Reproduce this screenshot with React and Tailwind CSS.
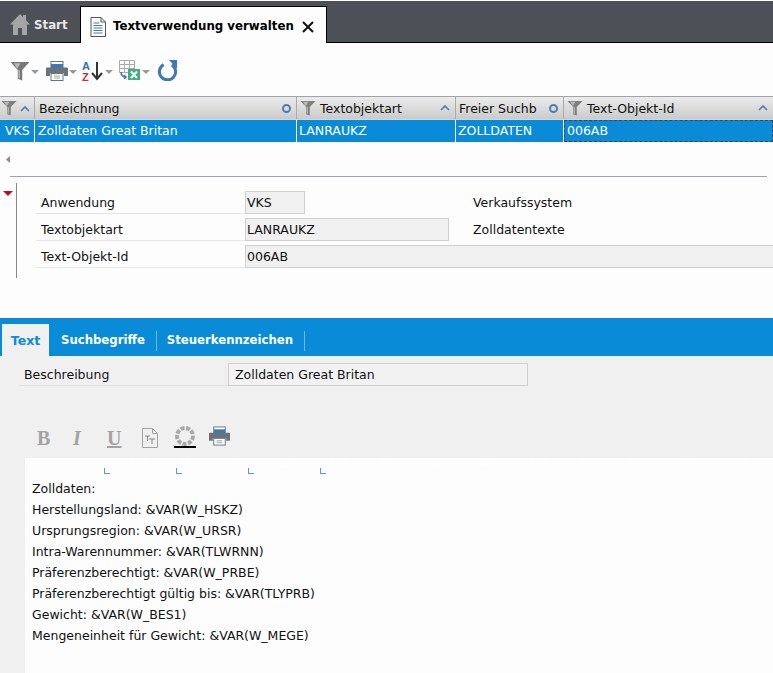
import React from "react";

const font = { fontFamily: '"DejaVu Sans", Verdana, sans-serif' };

function Funnel({ className = "w-[18px] h-[18px]", color = "#7f7f7f" }) {
  return (
    <svg viewBox="0 0 18 18" className={className}>
      <path d="M0.500 1h17l-6.500 7v9.500l-4-1.500V8z" fill={color} />
      <path d="M3.500 2h6l-3 5z" fill="#b8b8b8" />
      <path d="M7.500 8v7l1.500.7V8.500z" fill="#b0b0b0" />
    </svg>
  );
}
function Chevron() {
  return (
    <svg viewBox="0 0 10 6" className="w-[10px] h-[6px]">
      <path d="M1 5l4-4 4 4" fill="none" stroke="#4a7fb5" strokeWidth="1.700" />
    </svg>
  );
}
function Circle() {
  return <span className="w-[9px] h-[9px] rounded-full border-2 border-[#4a7fb5] shrink-0" />;
}
function Caret() {
  return (
    <svg viewBox="0 0 8 4" className="w-[8px] h-[4px] ml-[1px] mt-[2px] shrink-0">
      <path d="M0 0h8L4 4z" fill="#9a9a9a" />
    </svg>
  );
}
function Printer({ className }) {
  return (
    <svg viewBox="0 0 22 20" className={className}>
      <rect x="5" y="0.500" width="12" height="6" fill="#fff" stroke="#6b7378" />
      <path d="M0 7.500a1 1 0 011-1h20a1 1 0 011 1V15h-4v-3H4v3H0z" fill="#6b7378" />
      <rect x="5" y="3" width="12" height="4" fill="#3f78b3" />
      <rect x="5" y="12.500" width="12" height="7" fill="#fff" stroke="#6b7378" />
      <path d="M8 15h6M8 17h6" stroke="#8aa" strokeWidth="1" />
    </svg>
  );
}

function HeaderCell({ w, children, last }) {
  return (
    <div className={`h-[22px] pt-[2px] flex items-center shrink-0 border-r border-[#a8acaf] bg-gradient-to-b from-[#ececec] to-[#cbcbcb] ${w} ${last ? "grow border-r-0" : ""}`}>
      {children}
    </div>
  );
}

function Cell({ w, children, focus }) {
  return (
    <div className={`h-[22px] flex items-center shrink-0 text-white pl-[2px] ${w} ${focus ? "border border-dashed border-[#444] grow" : "border-r border-white"}`}>
      {children}
    </div>
  );
}

function FormRow({ label, value, inputW, note }) {
  return (
    <div className="flex items-start h-[27px]">
      <div className="w-[209px] h-[27px] pt-[6px] shrink-0 flex items-center pl-[5px] border-b border-[#e6e6e6] text-[#111]">{label}</div>
      <div className={`pt-[4px] ${note ? "w-[204px] shrink-0" : "shrink-0"}`}>
        <div className={`h-[23px] ${inputW} border border-[#cfcfcf] bg-[#f0f0f0] flex items-center pl-[1px] pt-[2px]`}>{value}</div>
      </div>
      {note && <div className="ml-[24px] h-[27px] pt-[6px] flex items-center text-[#111]">{note}</div>}
    </div>
  );
}

const textLines = [
  "Zolldaten:",
  "Herstellungsland: &VAR(W_HSKZ)",
  "Ursprungsregion: &VAR(W_URSR)",
  "Intra-Warennummer: &VAR(TLWRNN)",
  "Präferenzberechtigt: &VAR(W_PRBE)",
  "Präferenzberechtigt gültig bis: &VAR(TLYPRB)",
  "Gewicht: &VAR(W_BES1)",
  "Mengeneinheit für Gewicht: &VAR(W_MEGE)",
];

const ruler = [0, 50, 100, 150, 200, 250, 300, 350, 400, 450, 500, 550, 600, 650, 700];

export default function App() {
  return (
    <div className="w-[773px] h-[673px] overflow-hidden bg-[#fdfdfd] text-[12.5px] text-[#111] flex flex-col" style={font}>
      {/* tab bar */}
      <div className="h-[42px] shrink-0 mt-[1px] bg-[#4d5157] border-b border-black flex items-end">
        <div className="w-[80px] h-[37px] pt-[3px] flex items-center pl-[10px] gap-[4px] text-[#e8e8e8] font-bold text-[11.8px]">
          <svg viewBox="0 0 20 21" className="w-[20px] h-[21px] shrink-0 -mt-[1px]">
            <path d="M10 0L0 10.500h3V21h5v-7h4v7h5V10.500h3L16 6.300V1h-3v2.200z" fill="#a5a5a5" />
          </svg>
          <span className="mt-[1px]">Start</span>
        </div>
        <div className="w-[247px] h-[37px] pt-[3px] -mb-[1px] bg-[#fdfdfd] border border-black border-b-0 flex items-center pl-[9px] font-bold text-[11.8px] text-black">
          <svg viewBox="0 0 16 20" className="w-[16px] h-[20px] shrink-0">
            <path d="M1 .5h10l4.500 4.500v14.500H1z" fill="#fff" stroke="#555" />
            <path d="M11 .5V5h4.500" fill="none" stroke="#555" />
            <path d="M3.500 6h6M3.500 8.500h9M3.500 11h9M3.500 13.500h9M3.500 16h9" stroke="#3f78c0" />
          </svg>
          <span className="ml-[7px] whitespace-nowrap">Textverwendung verwalten</span>
          <svg viewBox="0 0 12 12" className="w-[12px] h-[12px] ml-[8px] shrink-0">
            <path d="M1 1l10 10M11 1L1 11" stroke="#111" strokeWidth="2" />
          </svg>
        </div>
      </div>

      {/* toolbar */}
      <div className="h-[53px] pt-[2px] shrink-0 flex items-center pl-[10px]">
        <Funnel className="w-[20px] h-[20px]" color="#777" />
        <Caret />
        <Printer className="w-[22px] h-[20px] ml-[7px]" />
        <Caret />
        <svg viewBox="0 0 22 22" className="w-[22px] h-[22px] ml-[5px] shrink-0">
          <text x="0" y="10" fontSize="11" fontWeight="bold" fill="#2f6fb5" fontFamily="Liberation Sans">A</text>
          <text x="0" y="21" fontSize="11" fontWeight="bold" fill="#c8321e" fontFamily="Liberation Sans">Z</text>
          <path d="M15 2v17M10 13l5 6 5-6" fill="none" stroke="#333" strokeWidth="2" />
        </svg>
        <Caret />
        <svg viewBox="0 0 22 21" className="w-[22px] h-[21px] ml-[6px] shrink-0">
          <path d="M.5.500h15v12H.5zM5.500.500v12M10.500.500v12M.5 4.500h15M.5 8.500h15" fill="none" stroke="#aaa" />
          <rect x="9" y="9" width="12" height="11" fill="#3fae7f" />
          <path d="M12 11.500l6 6.500M18 11.500l-6 6.500" stroke="#fff" strokeWidth="2" />
          <path d="M2 12c0 4 2 5 5 5M5 15l2 2-2 2" fill="none" stroke="#3f78b3" strokeWidth="1.500" />
        </svg>
        <Caret />
        <svg viewBox="0 0 22 22" className="w-[21px] h-[21px] ml-[7px] shrink-0">
          <path d="M7 4.800a8.500 8.500 0 1 0 8.500.300" fill="none" stroke="#3f78b3" strokeWidth="3.200" />
          <path d="M12.500 0H21v9z" fill="#3f78b3" />
        </svg>
      </div>

      {/* grid */}
      <div className="shrink-0 border-t border-[#a0a4a8] flex">
        <HeaderCell w="w-[35px]">
          <Funnel className="w-[16px] h-[18px] ml-[1px] -mt-[2px]" />
          <span className="ml-[3px] flex"><Chevron /></span>
        </HeaderCell>
        <HeaderCell w="w-[262px]">
          <span className="ml-[4px] grow">Bezeichnung</span>
          <span className="mr-[5px] flex -mt-[2px]"><Circle /></span>
        </HeaderCell>
        <HeaderCell w="w-[159px]">
          <Funnel className="w-[16px] h-[18px] ml-[3px] -mt-[2px]" />
          <span className="ml-[4px] grow">Textobjektart</span>
          <span className="mr-[5px] flex -mt-[2px]"><Chevron /></span>
        </HeaderCell>
        <HeaderCell w="w-[108px]">
          <span className="ml-[3px] grow whitespace-nowrap">Freier Suchb</span>
          <span className="mr-[5px] flex -mt-[2px]"><Circle /></span>
        </HeaderCell>
        <HeaderCell w="w-[209px]" last>
          <Funnel className="w-[16px] h-[18px] ml-[3px] -mt-[2px]" />
          <span className="ml-[4px] grow">Text-Objekt-Id</span>
          <span className="mr-[5px] flex -mt-[2px]"><Chevron /></span>
        </HeaderCell>
      </div>
      <div className="shrink-0 flex bg-[#0a8bd8] border-t border-[#d5d5d5]">
        <Cell w="w-[35px]"><span className="ml-[3px]">VKS</span></Cell>
        <Cell w="w-[262px]"><span className="ml-[1px]">Zolldaten Great Britan</span></Cell>
        <Cell w="w-[159px]"><span>LANRAUKZ</span></Cell>
        <Cell w="w-[108px]"><span>ZOLLDATEN</span></Cell>
        <Cell w="w-[209px]" focus><span>006AB</span></Cell>
      </div>

      {/* scroll arrow + rule */}
      <div className="h-[34px] shrink-0 flex items-center pl-[6px]">
        <svg viewBox="0 0 4 7" className="w-[4px] h-[7px]"><path d="M4 0v7L0 3.500z" fill="#888" /></svg>
      </div>
      <div className="h-px shrink-0 ml-[10px] mr-[6px] bg-[#a0a4a8]" />

      {/* form */}
      <div className="h-[141px] shrink-0 flex pt-[6px]">
        <div className="w-[17px] h-[95px] relative border-r border-[#888] shrink-0">
          <svg viewBox="0 0 10 5" className="absolute left-[3px] top-[8px] w-[10px] h-[5px]"><path d="M0 0h10L5 5z" fill="#c00d1e" /></svg>
        </div>
        <div className="pl-[19px] pt-[4px] grow min-w-0">
          <FormRow label="Anwendung" value="VKS" inputW="w-[60px]" note="Verkaufssystem" />
          <FormRow label="Textobjektart" value="LANRAUKZ" inputW="w-[204px]" note="Zolldatentexte" />
          <FormRow label="Text-Objekt-Id" value="006AB" inputW="w-[600px]" />
        </div>
      </div>

      {/* blue tabs */}
      <div className="h-[38px] shrink-0 bg-[#0a8bd8] flex items-end font-bold text-[11.7px] text-white">
        <div className="ml-[2px] w-[47px] h-[32px] pt-[2px] bg-[#f0f0f0] text-[#0a8bd8] text-[12.5px] flex items-center justify-center">Text</div>
        <div className="h-[32px] pt-[2px] flex items-center">
          <span className="ml-[12px] whitespace-nowrap">Suchbegriffe</span>
          <span className="ml-[11px] w-px h-[20px] bg-[#6fb8e6]" />
          <span className="ml-[10px] whitespace-nowrap">Steuerkennzeichen</span>
          <span className="ml-[11px] w-px h-[20px] bg-[#6fb8e6]" />
        </div>
      </div>

      {/* body */}
      <div className="grow bg-[#f0f0f0] flex flex-col min-h-0">
        <div className="shrink-0 flex items-start h-[33px]">
          <div className="ml-[19px] w-[209px] h-[30px] pt-[10px] flex items-center pl-[5px] border-b border-[#e0e0e0]">Beschreibung</div>
          <div className="mt-[7px] w-[300px] h-[23px] pt-[2px] border border-[#cfcfcf] bg-[#f2f2f2] flex items-center pl-[6px]">Zolldaten Great Britan</div>
        </div>

        <div className="h-[69px] shrink-0 flex items-end pb-[10px] pl-[37px]">
          <span className="w-[36px] text-[20px] leading-[20px] font-bold text-[#a3a3a3]" style={{ fontFamily: '"Liberation Serif", serif' }}>B</span>
          <span className="w-[34px] text-[20px] leading-[20px] italic font-bold text-[#a3a3a3]" style={{ fontFamily: '"Liberation Serif", serif' }}>I</span>
          <span className="w-[35px] text-[20px] leading-[20px] font-bold text-[#a3a3a3] underline" style={{ fontFamily: '"Liberation Serif", serif' }}>U</span>
          <svg viewBox="0 0 16 20" className="w-[16px] h-[20px]">
            <path d="M.5.500h10l5 5v14H.5z" fill="none" stroke="#a3a3a3" />
            <path d="M10.500.500v5h5" fill="none" stroke="#a3a3a3" />
            <path d="M3 8h5M5.500 8v5M7 11h6M10 11v5" stroke="#888" fill="none" />
          </svg>
          <div className="ml-[16px] flex flex-col items-center">
            <svg viewBox="0 0 22 20" className="w-[22px] h-[20px]">
              <circle cx="11" cy="10" r="8" fill="none" stroke="#a8a8a8" strokeWidth="4" strokeDasharray="4 1.500" />
            </svg>
            <div className="w-[22px] h-[2px] bg-black" />
          </div>
          <Printer className="w-[21px] h-[20px] ml-[13px] mb-[2px]" />
        </div>

        <div className="grow ml-[25px] bg-[#fdfdfd] min-h-0">
          <div className="h-[20px] relative overflow-hidden">
            {ruler.map((n, i) => (
              <span key={n} className="absolute top-0 text-[11px] leading-[12px] text-white" style={{ left: 4 + i * 50 }}>{n}</span>
            ))}
            {[79, 151, 223, 295].map((x) => (
              <span key={x} className="absolute top-[10px] w-[6px] h-[6px] border-l border-b border-[#5b9bc8]" style={{ left: x }} />
            ))}
          </div>
          <div className="pl-[7px] leading-[21px] text-[#111]">
            {textLines.map((t) => <div key={t} className="h-[21px] whitespace-nowrap">{t}</div>)}
          </div>
        </div>
      </div>
    </div>
  );
}
